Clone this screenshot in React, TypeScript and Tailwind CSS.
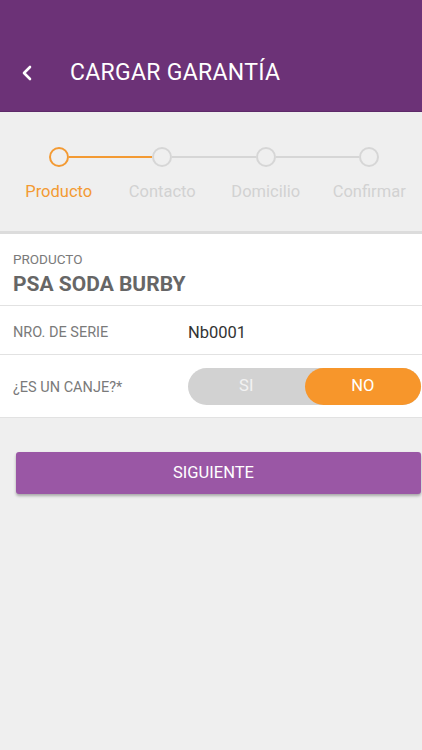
import { useState } from 'react';

const steps = ['Producto', 'Contacto', 'Domicilio', 'Confirmar'];

function Stepper({ current }: { current: number }) {
  return (
    <div className="flex px-[7px]">
      {steps.map((s, i) => {
        const done = i <= current;
        return (
          <div key={s} className="flex w-[103.5px] shrink-0 flex-col items-center">
            <div className="relative flex h-[20px] w-full items-center justify-center">
              {/* line coming in from the previous step */}
              {i > 0 && (
                <div
                  className={`absolute left-0 right-1/2 top-[9px] mr-[10px] h-[2px] ${
                    i - 1 <= current ? 'bg-[#f39a33]' : 'bg-[#d6d6d6]'
                  }`}
                />
              )}
              {/* line going out to the next step */}
              {i < steps.length - 1 && (
                <div
                  className={`absolute left-1/2 right-0 top-[9px] ml-[10px] h-[2px] ${
                    i <= current ? 'bg-[#f39a33]' : 'bg-[#d6d6d6]'
                  }`}
                />
              )}
              <div
                className={`h-[20px] w-[20px] rounded-full border-2 ${
                  done ? 'border-[#f39a33]' : 'border-[#d6d6d6]'
                }`}
              />
            </div>
            <span
              className={`mt-[15px] text-[16.5px] leading-[20px] ${
                done ? 'text-[#f39a33]' : 'text-[#d2d2d2]'
              }`}
            >
              {s}
            </span>
          </div>
        );
      })}
    </div>
  );
}

export default function App() {
  const [canje, setCanje] = useState(false);

  return (
    <div className="min-h-[750px] bg-[#efefef]" style={{ fontFamily: 'Roboto, "Noto Sans", sans-serif' }}>
      {/* Header */}
      <div className="flex h-[112px] items-center border-b border-[#5e2a69] bg-[#6c3277] pt-[34px] text-white">
        <button className="ml-[19px] flex h-[16px] w-[16px] items-center justify-center">
          <svg width="12" height="16" viewBox="0 0 12 16" fill="none">
            <path d="M9 2 L3 8 L9 14" stroke="white" strokeWidth="2.6" strokeLinecap="round" strokeLinejoin="round" />
          </svg>
        </button>
        <h1 className="ml-[35px] text-[23px] leading-[28px] tracking-[0.3px]">CARGAR GARANTÍA</h1>
      </div>

      {/* Stepper */}
      <div className="border-b-[3px] border-[#dcdcdc] pt-[35px] pb-[29px]">
        <Stepper current={0} />
      </div>

      {/* Card */}
      <div className="bg-white">
        <div className="h-[72px] border-b border-[#e2e2e2] px-[13px] pt-[17px]">
          <p className="text-[13.5px] leading-[16px] text-[#7a7a7a]">PRODUCTO</p>
          <p className="mt-[5px] text-[21px] font-bold leading-[24px] text-[#666666]">PSA SODA BURBY</p>
        </div>
        <div className="flex h-[49px] items-center border-b border-[#e2e2e2] pl-[13px] pt-[6px]">
          <span className="w-[175px] text-[14.5px] text-[#7a7a7a]">NRO. DE SERIE</span>
          <span className="text-[16.5px] text-[#333333]">Nb0001</span>
        </div>
        <div className="flex h-[63px] items-center border-b border-[#e2e2e2] pl-[13px]">
          <span className="mt-[4px] w-[175px] text-[14.5px] text-[#7a7a7a]">¿ES UN CANJE?*</span>
          <div className="mt-[1px] flex h-[37px] w-[233px] rounded-full bg-[#d2d2d2]">
            <button
              onClick={() => setCanje(true)}
              className={`flex flex-1 items-center justify-center rounded-full text-[16.5px] ${
                canje ? 'bg-[#f7962b] text-white' : 'text-[#f2f2f2]'
              }`}
            >
              SI
            </button>
            <button
              onClick={() => setCanje(false)}
              className={`flex flex-1 items-center justify-center rounded-full text-[16.5px] ${
                !canje ? 'bg-[#f7962b] text-white' : 'text-[#f2f2f2]'
              }`}
            >
              NO
            </button>
          </div>
        </div>
      </div>

      {/* Button */}
      <div className="ml-[16px] mr-[1px] mt-[34px]">
        <button className="h-[42px] w-full rounded-[3px] bg-[#9a57a5] pr-[10px] text-[16.5px] text-white shadow-[0_2px_3px_rgba(0,0,0,0.3)]">
          SIGUIENTE
        </button>
      </div>
    </div>
  );
}
